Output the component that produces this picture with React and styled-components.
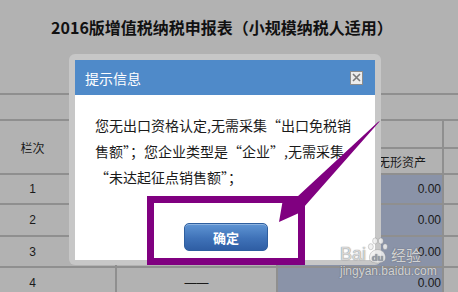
import React from 'react'
import styled, { createGlobalStyle } from 'styled-components'

const GlobalStyle = createGlobalStyle`
  html, body { margin: 0; padding: 0; }
  body {
    background: #b2b2b2;
    font-family: "Liberation Sans", "Noto Sans CJK SC", sans-serif;
  }
`

const Page = styled.div`
  position: relative;
  width: 458px;
  height: 292px;
  overflow: hidden;
  background: #b2b2b2;
`

const Title = styled.h1`
  margin: 0;
  height: 93px;
  box-sizing: border-box;
  padding: 16px 14px 0 0;
  text-align: center;
  font-size: 16px;
  line-height: 22px;
  font-weight: 700;
  color: #111;
  font-family: "Noto Sans CJK SC", sans-serif;
`

const Table = styled.div`
  display: grid;
  grid-template-columns: 115px 159px 164px 1fr;
  grid-template-rows: 24px 26px 24px 28px 30px 29px 30px;
  gap: 2px;
  border-top: 2px solid #8f8f8f;
  background: #8f8f8f;
  font-size: 12px;
  color: #1a1a1a;
`

const Cell = styled.div`
  background: ${({ $blue }) => ($blue ? '#8a93a8' : '#b2b2b2')};
  display: flex;
  align-items: center;
  justify-content: ${({ $align }) => $align || 'center'};
  padding: ${({ $pad }) => $pad || '0'};
  grid-column: ${({ $col }) => $col || 'auto'};
  grid-row: ${({ $row }) => $row || 'auto'};
  font-family: "Liberation Sans", "Noto Sans CJK SC", sans-serif;
`

const Modal = styled.div`
  position: absolute;
  left: 69px;
  top: 54px;
  width: 312px;
  height: 211px;
  box-sizing: border-box;
  padding: 6px 6px 5px;
  border-radius: 6px;
  background: #c7c7c7;
  display: flex;
  flex-direction: column;
`

const ModalHead = styled.div`
  height: 35px;
  flex: none;
  background: #4f8ac9;
  display: flex;
  align-items: center;
  justify-content: space-between;
  padding: 0 12px 0 10px;
  color: #fff;
  font-size: 14px;
  font-family: "Noto Sans CJK SC", sans-serif;
`

const CloseBox = styled.div`
  width: 11px;
  height: 12px;
  border: 1px solid #8c8c8c;
  background: #ececec;
  display: flex;
  align-items: center;
  justify-content: center;
`

const ModalBody = styled.div`
  flex: 1;
  background: #fff;
  padding: 17px 18px 0 20px;
  display: flex;
  flex-direction: column;
`

const Message = styled.p`
  margin: 0;
  font-size: 14px;
  line-height: 26px;
  color: #1a1a1a;
  font-family: "Noto Sans CJK SC", sans-serif;
  white-space: nowrap;
`

const Line = styled.span`
  display: block;
`

const OkButton = styled.button`
  align-self: center;
  margin-top: 33px;
  width: 84px;
  height: 28px;
  border: 1px solid #2f5f9f;
  border-radius: 5px;
  background: linear-gradient(#5f95d4, #3f72b8 55%, #2f5ea4);
  color: #fff;
  font-size: 13px;
  font-weight: 700;
  font-family: "Noto Sans CJK SC", sans-serif;
  box-shadow: inset 0 1px 0 rgba(255, 255, 255, 0.3);
`

const Overlay = styled.svg`
  position: absolute;
  left: 0;
  top: 0;
  pointer-events: none;
`

const Watermark = styled.div`
  position: absolute;
  left: 340px;
  top: 237px;
  display: flex;
  flex-direction: column;
  align-items: flex-start;
  color: rgba(240, 240, 240, 0.8);
  text-shadow: 0 0 1px rgba(90, 90, 90, 0.7), 0 0 1px rgba(90, 90, 90, 0.5);
  font-family: "Liberation Sans", "Noto Sans CJK SC", sans-serif;
`

const MarkRow = styled.div`
  display: flex;
  align-items: flex-end;
  gap: 1px;
  font-size: 18px;
  line-height: 20px;
`

const MarkWord = styled.span`
  font-family: "Noto Sans CJK SC", sans-serif;
  font-size: 15px;
  line-height: 19px;
  margin-left: 2px;
`

const MarkUrl = styled.div`
  font-size: 12px;
  line-height: 13px;
  margin-top: 1px;
`

const rows = [
  { n: '1', r: 4 },
  { n: '2', r: 5 },
  { n: '3', r: 6 },
  { n: '4', r: 7, dash: true },
]

function Paw() {
  return (
    <svg width="21" height="27" viewBox="0 0 22 28">
      <g fill="rgba(240,240,240,0.85)" stroke="rgba(110,110,110,0.5)" strokeWidth="0.6">
        <ellipse cx="4" cy="10" rx="2.6" ry="3.2" />
        <ellipse cx="8.5" cy="4" rx="2.6" ry="3.2" />
        <ellipse cx="14.5" cy="4" rx="2.6" ry="3.2" />
        <ellipse cx="19" cy="10" rx="2.4" ry="3" />
        <path d="M3 24 C1 18 6 13 11 13 C16 13 21 18 19 24 C17 28 5 28 3 24 Z" />
      </g>
      <text x="11" y="25" textAnchor="middle" fontSize="10" fontWeight="700" fontFamily="Liberation Sans, sans-serif" fill="#9aa0ad">du</text>
    </svg>
  )
}

export default function App() {
  return (
    <Page lang="zh-CN">
      <GlobalStyle />
      <Title>2016版增值税纳税申报表（小规模纳税人适用）</Title>
      <Table>
        <Cell $col="1" $row="1" />
        <Cell $col="2 / 5" $row="1" />
        <Cell $col="1" $row="2 / 4" $pad="0 50px 0 0">栏次</Cell>
        <Cell $col="2" $row="2 / 4" />
        <Cell $col="3" $row="2" />
        <Cell $col="4" $row="2" />
        <Cell $col="3" $row="3" $align="flex-end" $pad="0 16px 0 0">无形资产</Cell>
        <Cell $col="4" $row="3" />
        {rows.map((row) => (
          <React.Fragment key={row.n}>
            <Cell $col="1" $row={String(row.r)} $pad="0 50px 0 0">{row.n}</Cell>
            <Cell $col="2" $row={String(row.r)}>{row.dash ? '——' : ''}</Cell>
            <Cell $col="3" $row={String(row.r)} $blue $align="flex-end" $pad="0 1px 0 0">0.00</Cell>
            <Cell $col="4" $row={String(row.r)} />
          </React.Fragment>
        ))}
      </Table>

      <Modal>
        <ModalHead>
          <span>提示信息</span>
          <CloseBox>
            <svg width="9" height="9" viewBox="0 0 9 9">
              <path d="M1 1 L8 8 M8 1 L1 8" stroke="#7a7a7a" strokeWidth="1.6" />
            </svg>
          </CloseBox>
        </ModalHead>
        <ModalBody>
          <Message>
            <Line>您无出口资格认定,无需采集“出口免税销</Line>
            <Line>售额”；您企业类型是“企业”,无需采集</Line>
            <Line>“未达起征点销售额”；</Line>
          </Message>
          <OkButton>确定</OkButton>
        </ModalBody>
      </Modal>

      <Overlay width="458" height="292" viewBox="0 0 458 292">
        <rect x="150.5" y="199.5" width="151" height="62" fill="none" stroke="#800080" strokeWidth="7" />
        <polygon
          points="380,121 304,207 299,213 279,222 283,199 297,197 378,122"
          fill="#800080"
        />
      </Overlay>

      <Watermark>
        <MarkRow>
          <span>Bai</span>
          <Paw />
          <MarkWord>经验</MarkWord>
        </MarkRow>
        <MarkUrl>jingyan.baidu.com</MarkUrl>
      </Watermark>
    </Page>
  )
}
